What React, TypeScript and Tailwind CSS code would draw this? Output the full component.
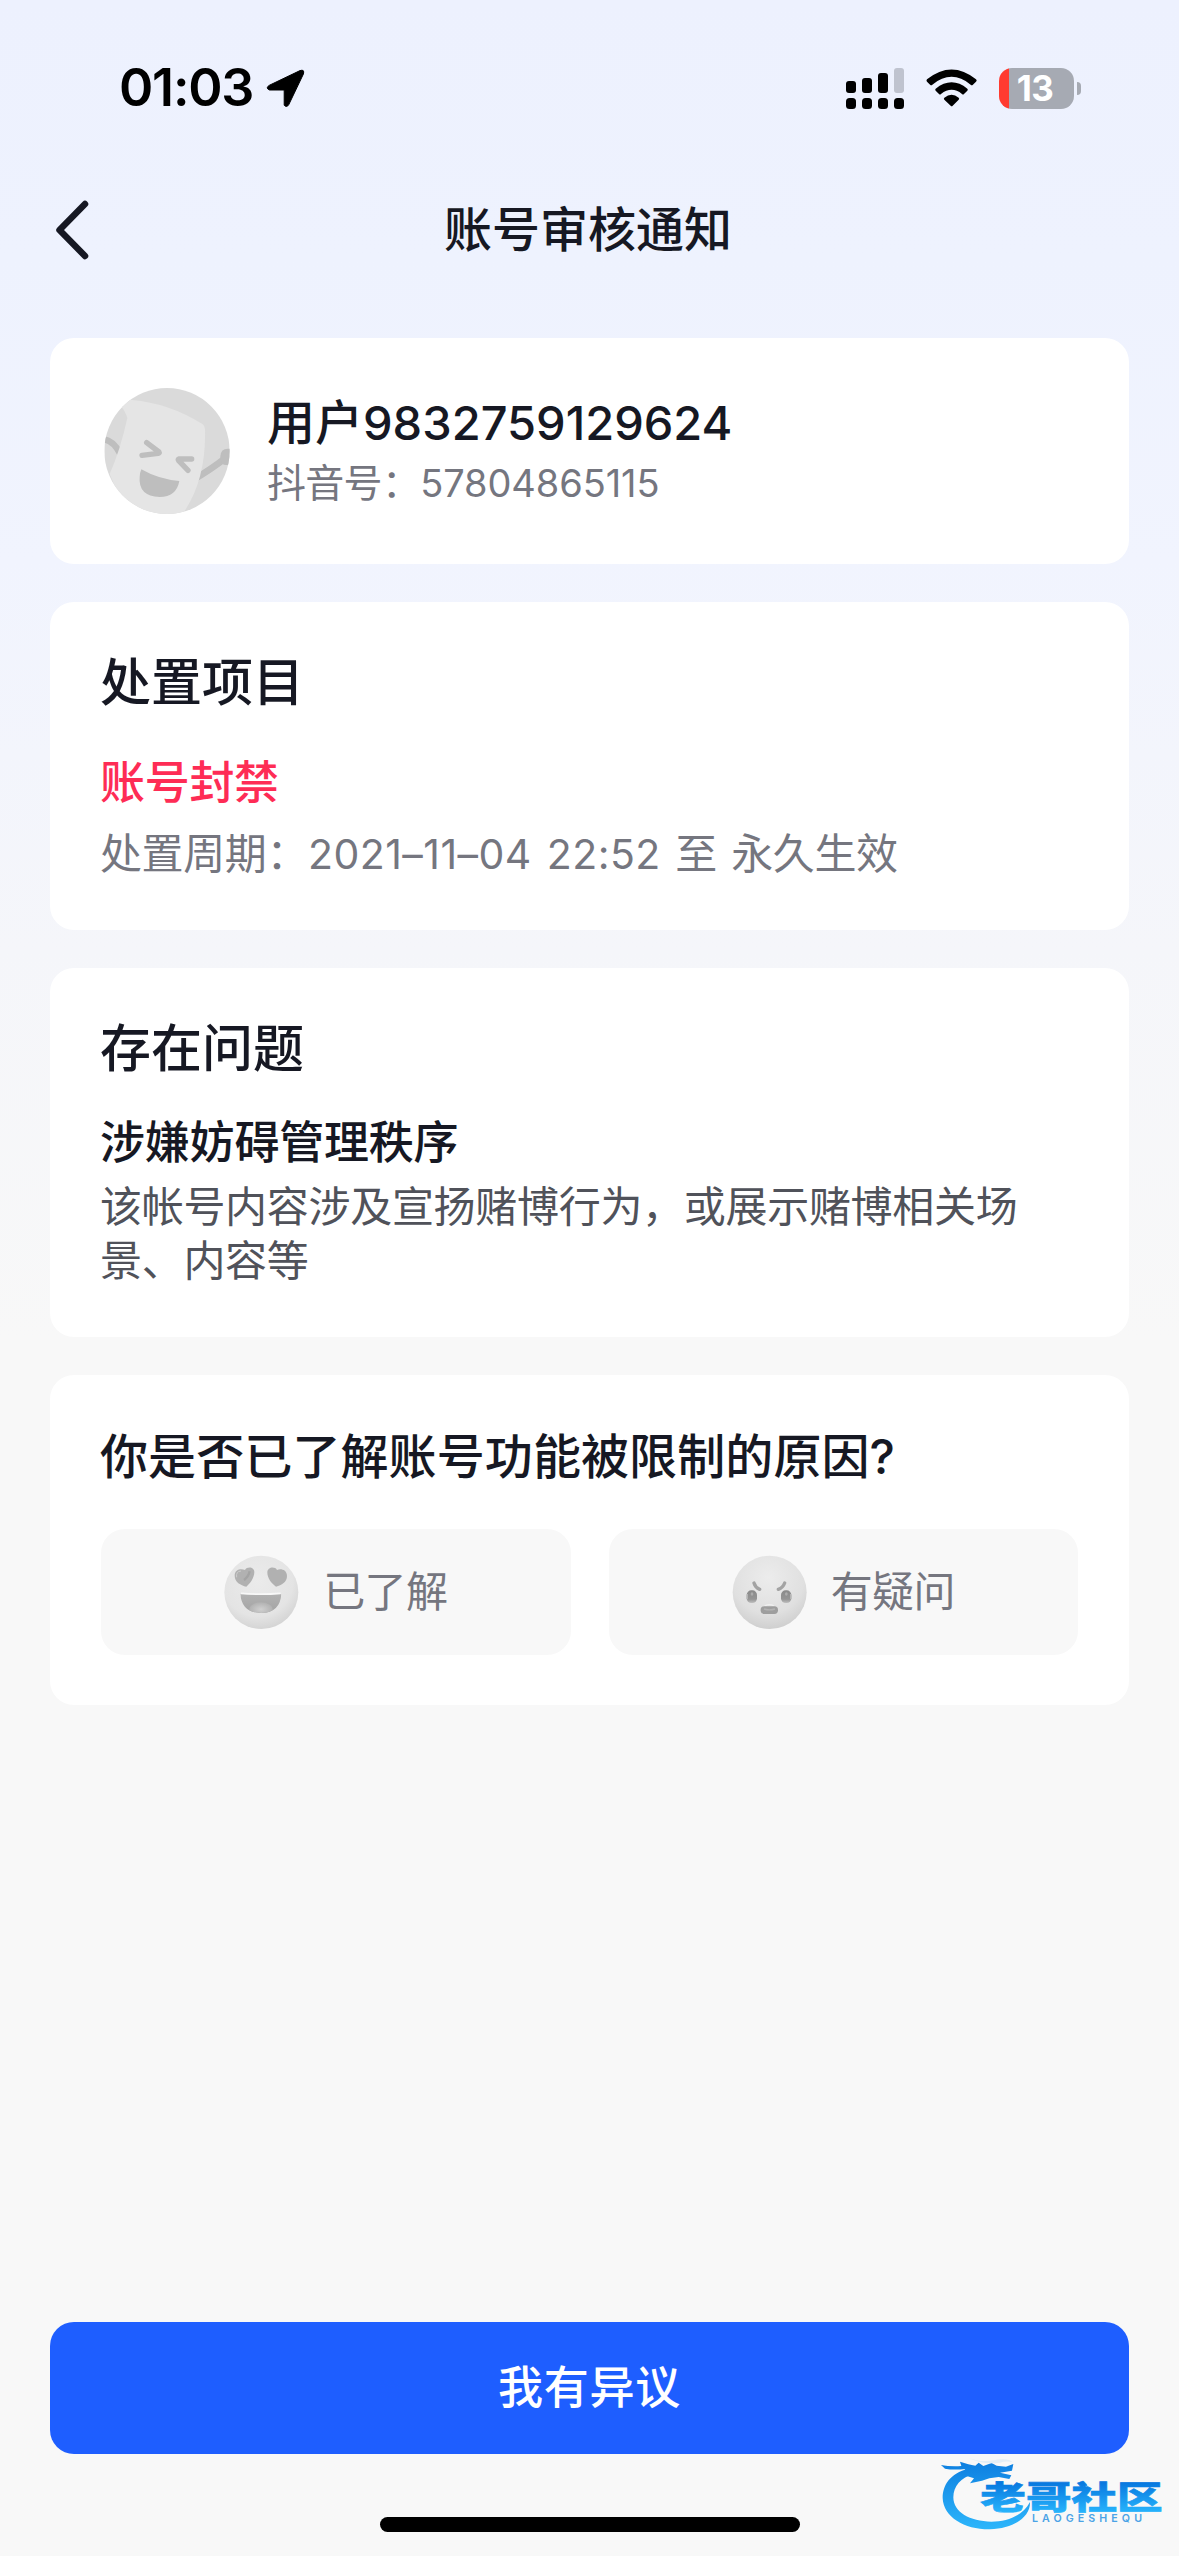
import React from "react";
import { clsx } from "clsx";

interface CardProps {
  className?: string;
  children: React.ReactNode;
}

const Card: React.FC<CardProps> = ({ className, children }) => (
  <section className={clsx("w-full rounded-[24px] bg-white px-[51px]", className)}>
    {children}
  </section>
);

const SignalIcon: React.FC = () => (
  <svg width="58" height="41" viewBox="0 0 58 41">
    <rect x="0" y="13" width="10" height="12" rx="3" />
    <rect x="16" y="10" width="10" height="15" rx="3" />
    <rect x="32" y="5" width="10" height="20" rx="3" />
    <rect x="48" y="0" width="10" height="25" rx="3" fill="#bfc3cf" />
    <rect x="0" y="30" width="10" height="11" rx="3.5" />
    <rect x="16" y="30" width="10" height="11" rx="3.5" />
    <rect x="32" y="30" width="10" height="11" rx="3.5" />
    <rect x="48" y="30" width="10" height="11" rx="3.5" />
  </svg>
);

const WifiIcon: React.FC = () => (
  <svg width="51" height="38" viewBox="378 85 153 114">
    <path d="M381 116Q455 57 528 116Q532 120 528 123L518 133Q515 135 512 132Q455 85 397 132Q394 135 391 133L381 123Q378 120 381 116Z" />
    <path d="M407 144Q455 106 502 144Q505 147 502 150L492 160Q489 163 486 160Q455 135 423 160Q420 163 417 160L407 150Q404 147 407 144Z" />
    <path d="M433 171Q455 154 476 171Q479 174 476 177L458 195Q455 198 452 195L433 177Q430 174 433 171Z" />
  </svg>
);

const StatusBar: React.FC = () => (
  <header className="flex h-[176px] items-center justify-between pl-[119px] pr-[98px] text-black">
    <div className="flex items-center">
      <span className="w-[147px] text-[52px] font-semibold leading-[60px] tracking-[-1.2px]">
        01:03
      </span>
      <svg width="39" height="39" viewBox="0 0 39 39">
        <path
          d="M3.5 16.2L34 1.6Q38.8 0 37.4 5L22.8 35.6Q20.7 39 18.2 36.2V21H3.5Q-1 19 3.5 16.2Z"
          stroke="#000"
          strokeWidth="1"
          strokeLinejoin="round"
        />
      </svg>
    </div>
    <div className="flex items-center">
      <SignalIcon />
      <div className="ml-[22px]">
        <WifiIcon />
      </div>
      <div className="ml-[22px] flex h-[41px] w-[75px] items-center justify-center overflow-hidden rounded-[13px] bg-[linear-gradient(to_right,#ff3b30_10px,#a6aab3_10px)] pr-[3px] text-[35px] font-bold leading-[41px] tracking-[-0.5px] text-white">
        13
      </div>
      <div className="ml-[3px] h-[13px] w-[4px] rounded-r-full bg-[#a6aab3]" />
    </div>
  </header>
);

const NavBar: React.FC = () => (
  <nav className="grid h-[108px] grid-cols-[1fr_auto_1fr] items-center px-[55px]">
    <button className="w-fit" aria-label="返回">
      <svg width="34" height="60" viewBox="0 0 34 60" fill="none">
        <path
          d="M30 4L4.5 30L30 56"
          stroke="#161823"
          strokeWidth="6.5"
          strokeLinecap="round"
          strokeLinejoin="round"
        />
      </svg>
    </button>
    <h1 className="pr-[3px] text-[48px] font-medium leading-[64px]">账号审核通知</h1>
  </nav>
);

const Avatar: React.FC = () => (
  <svg width="126" height="126" viewBox="42 54 376 378" className="shrink-0">
    <defs>
      <clipPath id="avatar-clip">
        <ellipse cx="230" cy="243" rx="188" ry="189" />
      </clipPath>
    </defs>
    <g clipPath="url(#avatar-clip)">
      <rect x="42" y="54" width="376" height="378" fill="#dadada" />
      <path d="M34 207Q68 208 90 252" fill="none" stroke="#bebebe" strokeWidth="19" />
      <path d="M308 330Q365 296 403 266" fill="none" stroke="#bebebe" strokeWidth="20" />
      <path d="M390 258Q392 236 412 236H425V286L400 284Q389 276 390 258Z" fill="#bebebe" />
      <path
        d="M92 108L118 89Q235 98 336 162Q344 167 344 178Q348 330 278 430L230 440L100 410L58 312Q90 240 111 144Q107 128 92 108Z"
        fill="#e5e5e5"
      />
      <path
        d="M169 218L206 246Q208 249 203 250L155 256M304 267L265 267Q262 268 265 272L293 301"
        fill="none"
        stroke="#bebebe"
        strokeWidth="16"
        strokeLinecap="round"
        strokeLinejoin="round"
      />
      <path
        d="M153 298Q205 328 267 333Q258 381 208 381Q143 378 148 320Q149 307 153 298Z"
        fill="#bebebe"
      />
    </g>
  </svg>
);

const LoveFace: React.FC = () => (
  <svg width="75" height="75" viewBox="71 73 225 225">
    <defs>
      <radialGradient id="love-skin" cx="0.45" cy="0.35" r="0.68">
        <stop offset="0" stopColor="#ebebeb" />
        <stop offset="0.7" stopColor="#e4e4e4" />
        <stop offset="1" stopColor="#d2d2d2" />
      </radialGradient>
      <linearGradient id="love-mouth" x1="0" y1="0" x2="0" y2="1">
        <stop offset="0" stopColor="#b5b5b5" />
        <stop offset="1" stopColor="#a2a2a2" />
      </linearGradient>
      <radialGradient id="love-tongue">
        <stop offset="0" stopColor="#d0d0d0" />
        <stop offset="1" stopColor="#b2b2b2" />
      </radialGradient>
      <clipPath id="love-mouth-clip">
        <path d="M120 189Q182 193 243 189Q240 246 182 247Q124 246 120 189Z" />
      </clipPath>
    </defs>
    <ellipse cx="183" cy="185" rx="111" ry="110" fill="url(#love-skin)" />
    <path
      d="M134 118C141 106 163 109 162 125C161 143 150 158 138 168C121 164 103 154 103 135C103 116 122 113 134 118Z"
      fill="#b1b1b1"
    />
    <path
      d="M230 118C224 106 201 109 201 125C201 143 213 158 227 168C244 164 260 154 260 136C260 117 241 113 230 118Z"
      fill="#b1b1b1"
    />
    <path d="M109 140Q106 122 122 121" fill="none" stroke="#cdcdcd" strokeWidth="3" />
    <path d="M131 148Q145 138 148 122" fill="none" stroke="#a3a3a3" strokeWidth="7" />
    <g clipPath="url(#love-mouth-clip)">
      <rect x="115" y="180" width="135" height="70" fill="url(#love-mouth)" />
      <ellipse cx="182" cy="236" rx="35" ry="21" fill="url(#love-tongue)" />
    </g>
    <path d="M122 188Q182 193 241 188" fill="none" stroke="#f8f8f8" strokeWidth="5" />
  </svg>
);

const AngryFace: React.FC = () => (
  <svg width="75" height="75" viewBox="66 73 225 225">
    <defs>
      <radialGradient id="angry-skin" cx="0.48" cy="0.3" r="0.75">
        <stop offset="0" stopColor="#ececec" />
        <stop offset="0.65" stopColor="#e0e0e0" />
        <stop offset="1" stopColor="#cbcbcb" />
      </radialGradient>
      <linearGradient id="angry-eye" x1="0" y1="0" x2="0" y2="1">
        <stop offset="0" stopColor="#8a8a8a" />
        <stop offset="0.7" stopColor="#959595" />
        <stop offset="1" stopColor="#c0c0c0" />
      </linearGradient>
    </defs>
    <ellipse cx="179" cy="185" rx="111" ry="110" fill="url(#angry-skin)" />
    <path
      d="M132 157Q136 171 149 176M224 157Q219 171 205 176"
      fill="none"
      stroke="#a3a3a3"
      strokeWidth="10"
      strokeLinecap="round"
    />
    <rect x="110" y="179" width="31" height="38" rx="14" fill="url(#angry-eye)" />
    <rect x="213" y="179" width="31" height="38" rx="14" fill="url(#angry-eye)" />
    <path d="M112 190V206M242 190V206" stroke="#b5b5b5" strokeWidth="4" />
    <ellipse cx="126" cy="190" rx="4" ry="5" fill="#acacac" />
    <ellipse cx="229" cy="190" rx="4" ry="5" fill="#acacac" />
    <path d="M164 226Q178 218 192 226" fill="none" stroke="#f0f0f0" strokeWidth="4" />
    <rect x="152" y="227" width="52" height="23" rx="11" fill="#9e9e9e" />
    <path d="M162 235Q178 240 195 235" fill="none" stroke="#b3b3b3" strokeWidth="4" />
  </svg>
);

const Watermark: React.FC = () => (
  <svg
    width="240"
    height="84"
    viewBox="108 60 720 252"
    className="absolute bottom-[22px] right-[3px]"
  >
    <defs>
      <linearGradient id="wm-ring" gradientUnits="userSpaceOnUse" x1="0" y1="95" x2="0" y2="298">
        <stop offset="0" stopColor="#0e7fe0" />
        <stop offset="1" stopColor="#2db6fb" />
      </linearGradient>
      <linearGradient id="wm-text" gradientUnits="userSpaceOnUse" x1="0" y1="160" x2="0" y2="247">
        <stop offset="0" stopColor="#0879e0" />
        <stop offset="1" stopColor="#27b4fc" />
      </linearGradient>
    </defs>
    <path
      d="M205 116C150 130 128 165 128 204C130 262 195 299 270 298C340 296 392 262 390 216C370 254 326 275 274 275C210 274 160 247 160 202C160 168 182 143 222 132Z"
      fill="url(#wm-ring)"
    />
    <path
      d="M123 105Q150 110 184 108L180 95L205 103L226 107L236 98L250 108L275 99L290 107L318 110L340 102L336 122L300 128L334 136L328 147L296 141L268 145L246 152L210 160L222 145L200 138L214 128L190 124L196 117Q160 121 135 116Z"
      fill="url(#wm-ring)"
    />
    <path
      d="M205 83Q240 98 280 91Q325 82 338 97Q320 92 300 98Q250 106 205 83Z"
      fill="#e3eef6"
    />
    <text
      x="241"
      y="238"
      textLength="547"
      lengthAdjust="spacingAndGlyphs"
      fontSize="96"
      fontWeight="900"
      fill="url(#wm-text)"
      stroke="url(#wm-text)"
      strokeWidth="2"
    >
      老哥社区
    </text>
    <text
      x="396"
      y="277"
      textLength="330"
      fontSize="32"
      fontWeight="600"
      fill="#4ba3e6"
    >
      LAOGESHEQU
    </text>
  </svg>
);

interface FeedbackOption {
  label: string;
  icon: React.ReactNode;
}

const feedbackOptions: FeedbackOption[] = [
  { label: "已了解", icon: <LoveFace /> },
  { label: "有疑问", icon: <AngryFace /> },
];

const App: React.FC = () => {
  return (
    <div className="relative flex h-[2556px] w-[1179px] flex-col overflow-hidden bg-[#f8f8f8] bg-[linear-gradient(180deg,#edf1fe_0px,#eef2fe_260px,#f1f4fe_560px,#f5f6fa_950px,#f8f8f8_1340px)] font-['Inter','Noto_Sans_CJK_SC',sans-serif] text-[#161823]">
      <StatusBar />
      <NavBar />

      <main className="mt-[54px] flex flex-col gap-[38px] px-[50px]">
        {/* Account */}
        <Card className="flex h-[226px] items-center gap-[37px] pl-[54px]">
          <Avatar />
          <div>
            <p className="text-[48px] font-medium leading-[64px]">
              用户<span className="text-[47px]">9832759129624</span>
            </p>
            <p className="text-[39px] leading-[56px] tracking-[-0.7px] text-[#75767f]">
              抖音号：<span className="text-[38px] tracking-[-0.1px]">57804865115</span>
            </p>
          </div>
        </Card>

        {/* Penalty */}
        <Card className="h-[328px] pt-[45px]">
          <h2 className="-ml-px text-[51px] font-medium leading-[72px]">处置项目</h2>
          <p className="-ml-px mt-[32px] text-[45px] font-medium leading-[64px] tracking-[-0.3px] text-[#fe2c55]">
            账号封禁
          </p>
          <p className="-ml-px mt-[9px] whitespace-nowrap text-[42px] leading-[60px] tracking-[-0.4px] text-[#75767f] [word-spacing:3px]">
            处置周期：<span className="text-[41px] tracking-[0.45px]">2021–11–04 22:52</span> 至 永久生效
          </p>
        </Card>

        {/* Reason */}
        <Card className="h-[369px] pt-[45px]">
          <h2 className="-ml-px text-[51px] font-medium leading-[72px]">存在问题</h2>
          <p className="-ml-px mt-[26px] text-[45px] font-medium leading-[64px] tracking-[-0.2px]">
            涉嫌妨碍管理秩序
          </p>
          <p className="-ml-px mt-[5px] text-[42px] leading-[54px] tracking-[-0.3px] text-[#50525a]">
            该帐号内容涉及宣扬赌博行为，或展示赌博相关场景、内容等
          </p>
        </Card>

        {/* Feedback */}
        <Card className="h-[330px] pt-[50px]">
          <h3 className="-ml-px text-[48px] font-medium leading-[64px] tracking-[0.1px]">
            你是否已了解账号功能被限制的原因?
          </h3>
          <div className="mt-[40px] grid grid-cols-2 gap-[38px]">
            {feedbackOptions.map((option) => (
              <button
                key={option.label}
                className="flex h-[126px] items-center justify-center gap-[24px] rounded-[24px] bg-[#f8f8f8] text-[42px] leading-[60px] tracking-[-0.6px] text-[#75767f]"
              >
                {option.icon}
                {option.label}
              </button>
            ))}
          </div>
        </Card>
      </main>

      <footer className="mt-auto flex flex-col items-center px-[50px] pb-[24px]">
        <button className="h-[132px] w-full rounded-[24px] bg-[#1e5eff] text-[45px] font-medium tracking-[0.8px] text-white">
          我有异议
        </button>
        <div className="mt-[63px] h-[15px] w-[420px] rounded-full bg-black" />
      </footer>

      <Watermark />
    </div>
  );
};

export default App;
